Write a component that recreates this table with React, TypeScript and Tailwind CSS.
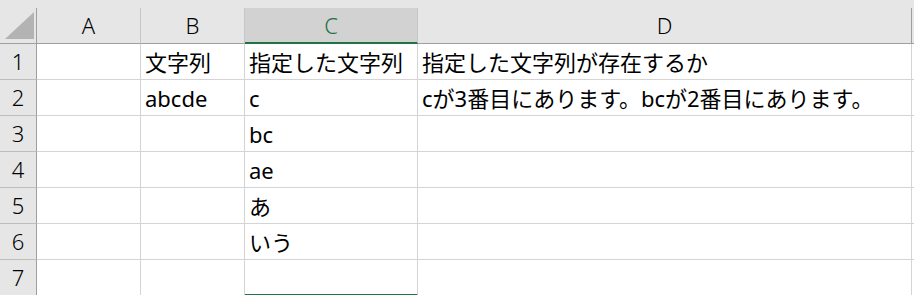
import React from "react";

const cols = ["A", "B", "C", "D"];

const rows: string[][] = [
  ["", "文字列", "指定した文字列", "指定した文字列が存在するか"],
  ["", "abcde", "c", "cが3番目にあります。bcが2番目にあります。"],
  ["", "", "bc", ""],
  ["", "", "ae", ""],
  ["", "", "あ", ""],
  ["", "", "いう", ""],
  ["", "", "", ""],
];

export default function App() {
  return (
    <div
      className="w-[914px] h-[295px] overflow-hidden bg-white text-black"
      style={{ fontFamily: '"Noto Sans", "Noto Sans CJK JP", sans-serif' }}
    >
      {/* strip above the column headers */}
      <div className="h-[8px] bg-[#e6e6e6]" />

      <div className="grid grid-cols-[37px_104px_104px_173px_494px_1fr]">
        {/* select-all corner */}
        <div className="relative h-[36px] bg-[#e6e6e6] border-r border-b border-[#9f9f9f]">
          <svg className="absolute left-[5px] top-[4px]" width="29" height="27" viewBox="0 0 29 27">
            <polygon points="0,27 29,27 29,0" fill="#b3b3b3" />
          </svg>
        </div>

        {cols.map((c) => (
          <div
            key={c}
            className={
              c === "C"
                ? "h-[36px] flex items-center justify-center bg-[#d2d2d2] border-r border-r-[#c6c6c6] border-b-2 border-b-[#217346] text-[#217346] text-[22px] font-light"
                : c === "D"
                ? "h-[36px] flex items-center justify-center bg-[#e6e6e6] border-r border-r-[#9f9f9f] border-b border-b-[#9f9f9f] text-[22px] font-light"
                : "h-[36px] flex items-center justify-center bg-[#e6e6e6] border-r border-r-[#c6c6c6] border-b border-b-[#9f9f9f] text-[22px] font-light"
            }
          >
            {c}
          </div>
        ))}
        <div className="h-[36px] bg-[#e6e6e6] border-b border-[#9f9f9f]" />

        {rows.map((r, i) => (
          <React.Fragment key={i}>
            <div className="h-[36px] flex items-center justify-center bg-[#e6e6e6] border-r border-r-[#9f9f9f] border-b border-b-[#bdbdbd] text-[22px] font-light">
              {i + 1}
            </div>
            {r.map((v, j) => (
              <div
                key={j}
                className={
                  j === 2 && i === rows.length - 1
                    ? "h-[36px] flex items-center pl-[4px] pt-[1px] border-r border-r-[#d4d4d4] border-b-2 border-b-[#217346] text-[22px] whitespace-nowrap"
                    : "h-[36px] flex items-center pl-[4px] pt-[1px] border-r border-b border-[#d4d4d4] text-[22px] whitespace-nowrap"
                }
              >
                {v}
              </div>
            ))}
            <div className="h-[36px] border-b border-[#d4d4d4]" />
          </React.Fragment>
        ))}
      </div>
    </div>
  );
}
